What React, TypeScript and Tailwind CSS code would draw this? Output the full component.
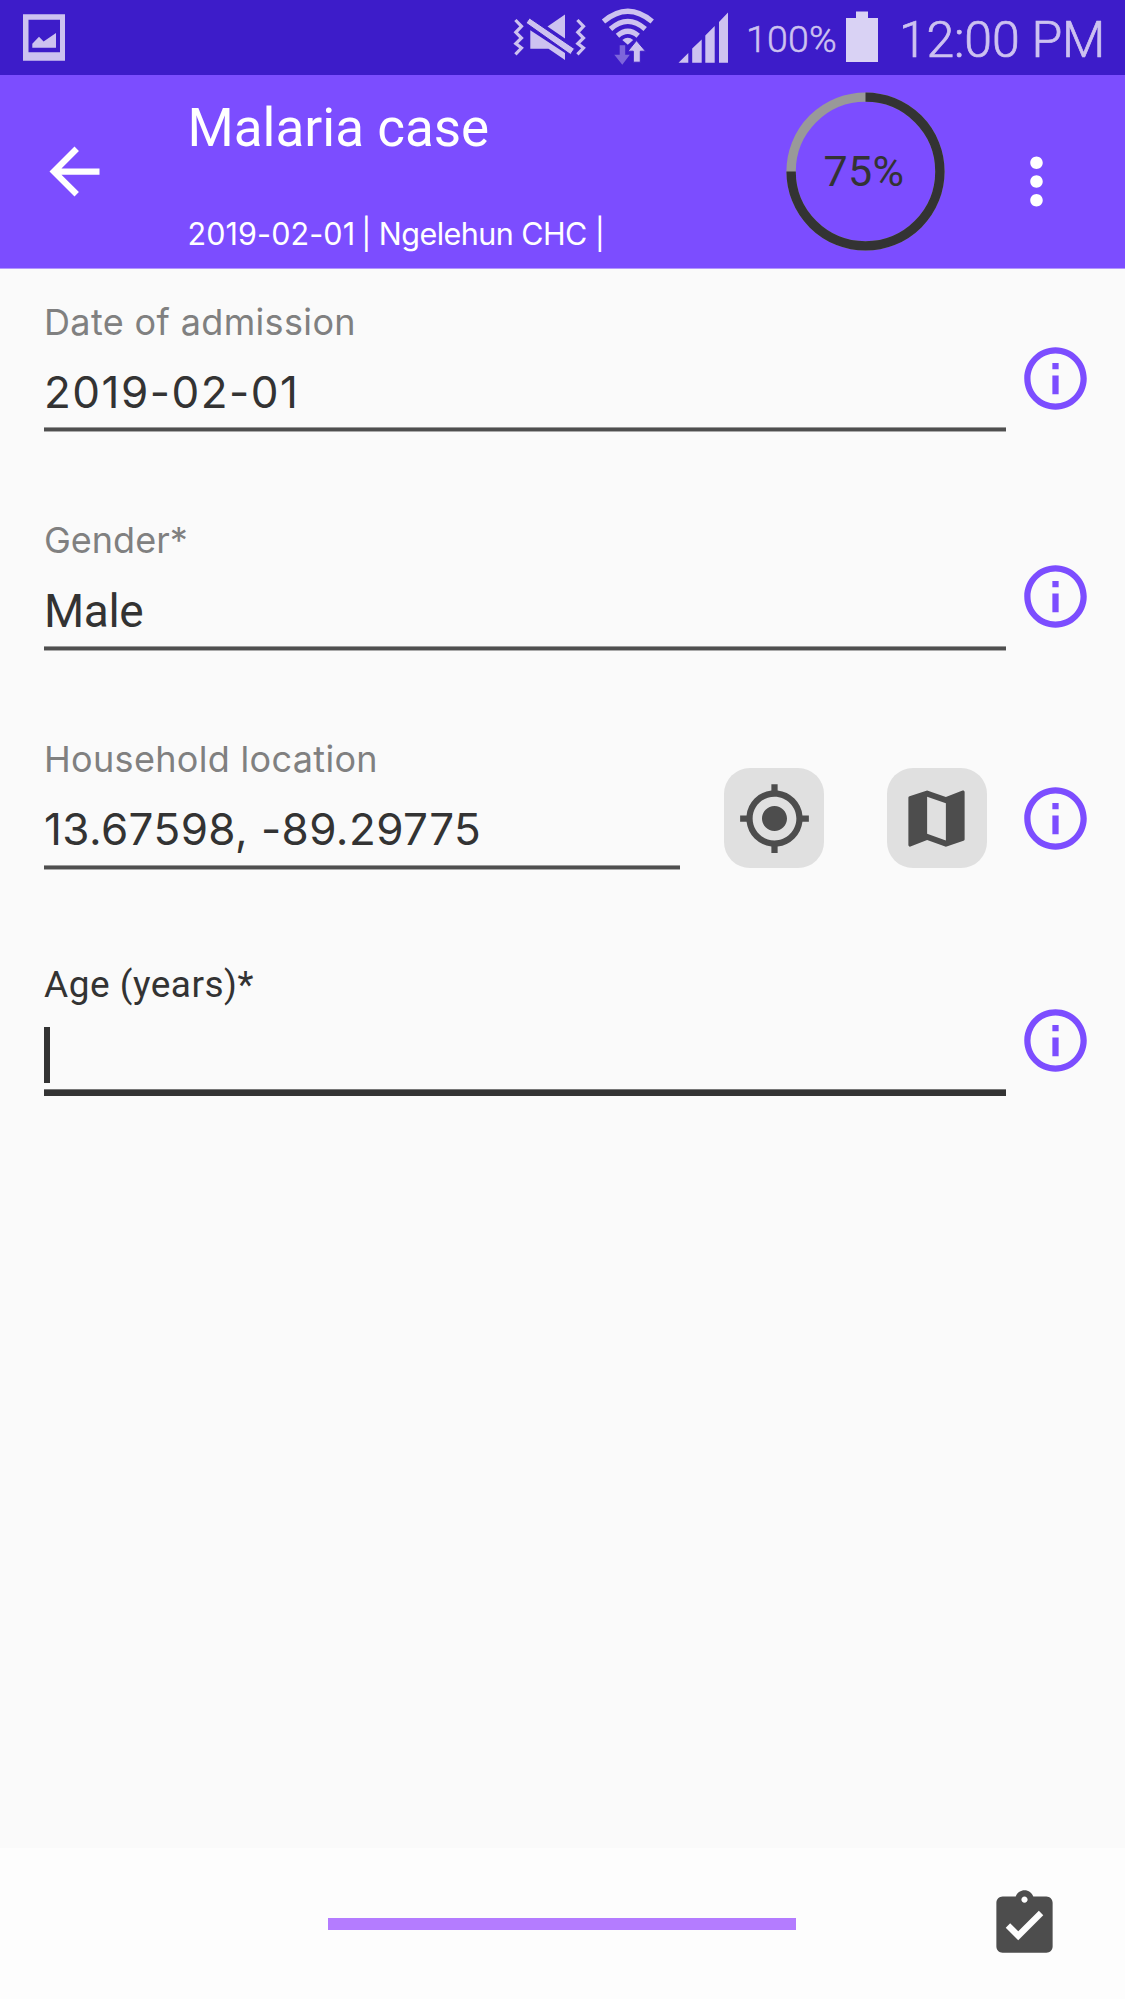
import type { ReactNode } from 'react';
import {
  MdArrowBack,
  MdAssignmentTurnedIn,
  MdInfoOutline,
  MdMap,
  MdMoreVert,
  MdMyLocation,
} from 'react-icons/md';

function StatusBar() {
  return (
    <div className="flex h-[75px] w-full items-start bg-[#3d1cc9] font-['Roboto',sans-serif] text-[#cdc2f0]">
      <svg className="mt-[14px] ml-[23px] h-[47px] w-[42px]" viewBox="0 0 42 47" fill="currentColor">
        <path fillRule="evenodd" d="M0 0.3H42V46.7H0ZM5.5 5.8V38.2H37V5.8Z" />
        <path d="M9.3 33.8V29.7L16 22.7L20.6 27.6L33 19V33.8Z" />
      </svg>
      <svg className="mt-[14px] ml-[448px] h-[48px] w-[74px]" viewBox="0 0 74 48" fill="currentColor">
        <g fill="none" stroke="currentColor" strokeWidth="3.2">
          <path d="M2.4 6L8.5 12.3L2.8 18.3L8.5 24L2.8 29.6L8.5 34L2.4 40.3" />
          <path d="M64.4 6L70.5 12.3L64.8 18.3L70.5 24L64.8 29.6L70.5 34L64.4 40.3" />
        </g>
        <path d="M17.3 16.2L52 39V46L35.5 34.7H17.3Z" />
        <path d="M34.5 12.5L52 0.5V24.5Z" />
        <path stroke="#3d1cc9" strokeWidth="1" d="M16.5 4L61.5 34.7L57.5 40.5L13 9Z" />
      </svg>
      <svg className="mt-[8px] ml-[14px] h-[58px] w-[54px]" viewBox="0 0 54 58">
        <g fill="none" stroke="#cdc2f0" strokeWidth="5.2">
          <path d="M2.5 13.5Q26.8 -7 51.2 13.5" />
          <path d="M9.5 21Q26.8 5.8 44.2 21" />
          <path d="M16.5 27.8Q26.8 18.8 37.2 27.8" />
        </g>
        <path fill="#cdc2f0" d="M21.3 32Q26.8 27.5 32.2 32L26.8 36.8Z" />
        <path fill="#cdc2f0" stroke="#3d1cc9" strokeWidth="1" d="M35.5 32.6L44.5 43.2H39.3V54.2H32.3V43.2H26.9Z" />
        <path fill="#7d65db" d="M18.7 37.2H24.2V46.8H28.8L21.3 56.8L13.3 46.8H18.7Z" />
      </svg>
      <svg className="mt-[12px] ml-[23px] h-[51px] w-[51px]" viewBox="0 0 51 51" fill="currentColor">
        <path d="M0.5 50.7L10.3 41V50.7ZM14.2 50.7V36.5L23.7 27.5V50.7ZM27.3 50.7V23.5L36.7 14V50.7ZM41 50.7V10L50 0.5V50.7Z" />
      </svg>
      <div className="mt-[8.5px] ml-[17px] w-[100px] text-[37.5px] leading-[60px] font-[350] tracking-[0.2px] whitespace-nowrap [-webkit-text-stroke:0.5px_#cdc2f0]">100%</div>
      <svg className="mt-[11px] h-[51px] w-[32px] text-[#d9d2f4]" viewBox="0 0 32 51" fill="currentColor">
        <path d="M0 7H10V0.5H22V7H32V51H0Z" />
      </svg>
      <div className="mt-[10px] ml-[21px] text-[50px] leading-[60px] font-[350] tracking-[-0.2px] whitespace-nowrap [-webkit-text-stroke:0.7px_#cdc2f0]">12:00 PM</div>
    </div>
  );
}

function ProgressRing() {
  return (
    <div className="mt-[17px] grid h-[159px] w-[159px] place-items-center">
      <svg className="col-start-1 row-start-1 h-[159px] w-[159px] -rotate-90" viewBox="0 0 159 159" fill="none" strokeWidth="9.4">
        <circle cx="79.5" cy="79.5" r="74.4" stroke="#999999" />
        <circle cx="79.5" cy="79.5" r="74.4" stroke="#333333" pathLength="100" strokeDasharray="75 25" />
      </svg>
      <span className="col-start-1 row-start-1 mr-[2px] mb-[2px] font-['Roboto',sans-serif] text-[43px] leading-[60px] tracking-[0.4px] text-[#333333]">75%</span>
    </div>
  );
}

function Header() {
  return (
    <header className="flex h-[194px] w-full items-start border-b border-[#b397fd] bg-[#7c4dff] bg-clip-padding text-white">
      <MdArrowBack className="mt-[59px] ml-[37px] h-[75px] w-[75px] shrink-0" />
      <div className="ml-[75.5px] w-[598px] shrink-0 pt-[23px] whitespace-nowrap">
        <h1 className="font-['Roboto',sans-serif] text-[53px] leading-[60px]">Malaria case</h1>
        <p className="mt-[56px] flex gap-[6px] font-['Inter',sans-serif] text-[30.5px] leading-[40px]">
          <span className="tracking-[0.1px]">2019-02-01</span>
          <span className="tracking-[-0.55px]">| Ngelehun CHC |</span>
        </p>
      </div>
      <ProgressRing />
      <MdMoreVert className="mt-[68.5px] ml-[54.5px] h-[75px] w-[75px] shrink-0" />
    </header>
  );
}

type FieldProps = {
  label: string;
  labelClass: string;
  children: ReactNode;
  lineClass: string;
  className: string;
  actions?: ReactNode;
  infoClass: string;
};

function Field({ label, labelClass, children, lineClass, className, actions, infoClass }: FieldProps) {
  return (
    <div className={`flex items-start pl-[44px] ${className}`}>
      <div className="min-w-0 flex-1 whitespace-nowrap">
        <div className={`h-[44px] leading-[44px] ${labelClass}`}>{label}</div>
        {children}
        <div className={lineClass} />
      </div>
      {actions}
      <MdInfoOutline className={`mr-[32px] ml-[12px] h-[75px] w-[75px] shrink-0 text-[#7c4dff] ${infoClass}`} />
    </div>
  );
}

function IconButton({ children, className }: { children: ReactNode; className: string }) {
  return (
    <button className={`flex h-[100px] w-[100px] shrink-0 items-center justify-center rounded-[26px] bg-[#e0e0e0] text-[#4d4d4d] ${className}`}>
      {children}
    </button>
  );
}

const thinLine = 'mt-[7px] h-[5px] border-y border-t-[#999] border-b-[#aaa] bg-[#4f4f4f]';

export default function App() {
  return (
    <div className="flex h-[1999px] w-[1125px] flex-col overflow-hidden bg-[#fafafa]">
      <StatusBar />
      <Header />
      <main className="flex-1 pt-[31px] text-[#333333]">
        <Field
          label="Date of admission"
          labelClass="font-['Inter',sans-serif] text-[36px] tracking-[0.36px] text-[#808080]"
          lineClass={thinLine}
          className="h-[219px]"
          infoClass="mt-[40.5px]"
        >
          <div className="mt-[20px] h-[56px] font-['Inter',sans-serif] text-[44px] leading-[56px] tracking-[1.5px]">2019-02-01</div>
        </Field>
        <Field
          label="Gender*"
          labelClass="-mt-px font-['Inter',sans-serif] text-[36px] text-[#808080]"
          lineClass={thinLine}
          className="h-[219px]"
          infoClass="mt-[40px]"
        >
          <div className="mt-[21px] h-[56px] font-['Roboto',sans-serif] text-[46px] leading-[56px] tracking-[-0.4px]">Male</div>
        </Field>
        <Field
          label="Household location"
          labelClass="-mt-px font-['Inter',sans-serif] text-[36px] tracking-[0.32px] text-[#808080]"
          lineClass="mt-[8px] h-[5px] border-y border-t-[#999] border-b-[#aaa] bg-[#4f4f4f]"
          className="h-[225px]"
          infoClass="mt-[43px]"
          actions={
            <>
              <IconButton className="mt-[30px] ml-[44px]"><MdMyLocation className="h-[75px] w-[75px]" /></IconButton>
              <IconButton className="mt-[30px] mr-[19.5px] ml-[62.5px]"><MdMap className="h-[75px] w-[75px]" /></IconButton>
            </>
          }
        >
          <div className="mt-[20px] h-[56px] font-['Inter',sans-serif] text-[44px] leading-[56px] tracking-[0.42px]">13.67598, -89.29775</div>
        </Field>
        <Field
          label="Age (years)*"
          labelClass="font-['Roboto',sans-serif] text-[37px] tracking-[0.5px]"
          lineClass="mt-[6px] h-[7px] border-t border-t-[#777] bg-[#333333]"
          className="h-[219px]"
          infoClass="mt-[40px]"
        >
          <div className="mt-[20px] h-[56px] w-[6px] bg-[#333333]" />
        </Field>
      </main>
      <footer className="flex h-[151px] items-start bg-[#fdfdfd]">
        <div className="mt-[69.5px] ml-[328px] h-[12.5px] w-[468px] bg-[#b47cff]" />
        <MdAssignmentTurnedIn className="mt-[38.5px] ml-[190.5px] h-[75px] w-[75px] text-[#4d4d4d]" />
      </footer>
    </div>
  );
}
